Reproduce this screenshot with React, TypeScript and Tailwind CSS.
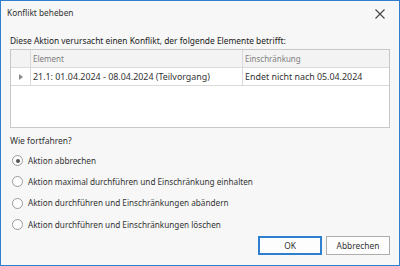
import React from "react";

const font = { fontFamily: '"Noto Sans", "Open Sans", sans-serif' };

function Radio({ checked, label }: { checked?: boolean; label: string }) {
  return (
    <div className="flex items-center h-[21.33px]">
      <span className="w-[11px] h-[11px] rounded-full border border-[#9a9a9a] bg-white flex items-center justify-center shrink-0">
        {checked && <span className="w-[4px] h-[4px] rounded-full bg-[#555]" />}
      </span>
      <span className="ml-[5px] text-[8.2px] text-[#333]">{label}</span>
    </div>
  );
}

export default function App() {
  return (
    <div
      className="w-[400px] h-[266px] border border-[#2f7fd1] bg-[#f7f7f7] flex flex-col overflow-hidden"
      style={font}
    >
      <div className="h-[25px] flex items-center justify-between pl-[6px] pr-[14px] shrink-0">
        <span className="text-[8.3px] text-[#333]">Konflikt beheben</span>
        <svg width="10" height="10" viewBox="0 0 10 10">
          <path d="M0.5 0.5 L9.5 9.5 M9.5 0.5 L0.5 9.5" stroke="#444" strokeWidth="1.1" />
        </svg>
      </div>
      <div className="flex flex-col pl-[9px] pr-[9px]">
        <div className="h-[23px] flex items-end pb-[1px] text-[8.4px] text-[#222]">
          Diese Aktion verursacht einen Konflikt, der folgende Elemente betrifft:
        </div>
        <div className="h-[79px] border border-[#c8c8c8] bg-white flex flex-col">
          <div className="h-[18px] flex bg-[#f3f3f3] border-b border-[#dadada]">
            <div className="w-[20px] border-r border-[#dadada]" />
            <div className="w-[212px] border-r border-[#dadada] pl-[2px] flex items-center text-[8px] text-[#808080]">
              Element
            </div>
            <div className="flex-1 pl-[2px] flex items-center text-[8px] text-[#808080]">
              Einschränkung
            </div>
          </div>
          <div className="h-[18px] flex border-b border-[#dadada]">
            <div className="w-[20px] border-r border-[#dadada] flex items-center justify-center">
              <svg width="4" height="6" viewBox="0 0 4 6">
                <path d="M0 0 L4 3 L0 6 Z" fill="#8a8a8a" />
              </svg>
            </div>
            <div className="w-[212px] border-r border-[#dadada] pl-[2px] flex items-center text-[8.9px] text-[#333]">
              21.1: 01.04.2024 - 08.04.2024 (Teilvorgang)
            </div>
            <div className="flex-1 pl-[2px] flex items-center text-[8.9px] text-[#333]">
              Endet nicht nach 05.04.2024
            </div>
          </div>
        </div>
        <div className="h-[20px] mt-[3px] flex items-center text-[8.5px] text-[#333]">
          Wie fortfahren?
        </div>
        <div className="flex flex-col mt-[-1px] pl-[2px]">
          <Radio checked label="Aktion abbrechen" />
          <Radio label="Aktion maximal durchführen und Einschränkung einhalten" />
          <Radio label="Aktion durchführen und Einschränkungen abändern" />
          <Radio label="Aktion durchführen und Einschränkungen löschen" />
        </div>
        <div className="flex justify-end gap-[4px] mt-[1px]">
          <button className="w-[64px] h-[19px] border-2 border-[#2f7fd1] bg-[#fdfdfd] text-[8.4px] text-[#333] flex items-center justify-center">
            OK
          </button>
          <button className="w-[64px] h-[19px] border border-[#adadad] bg-[#fdfdfd] text-[8.4px] text-[#333] flex items-center justify-center">
            Abbrechen
          </button>
        </div>
      </div>
    </div>
  );
}
